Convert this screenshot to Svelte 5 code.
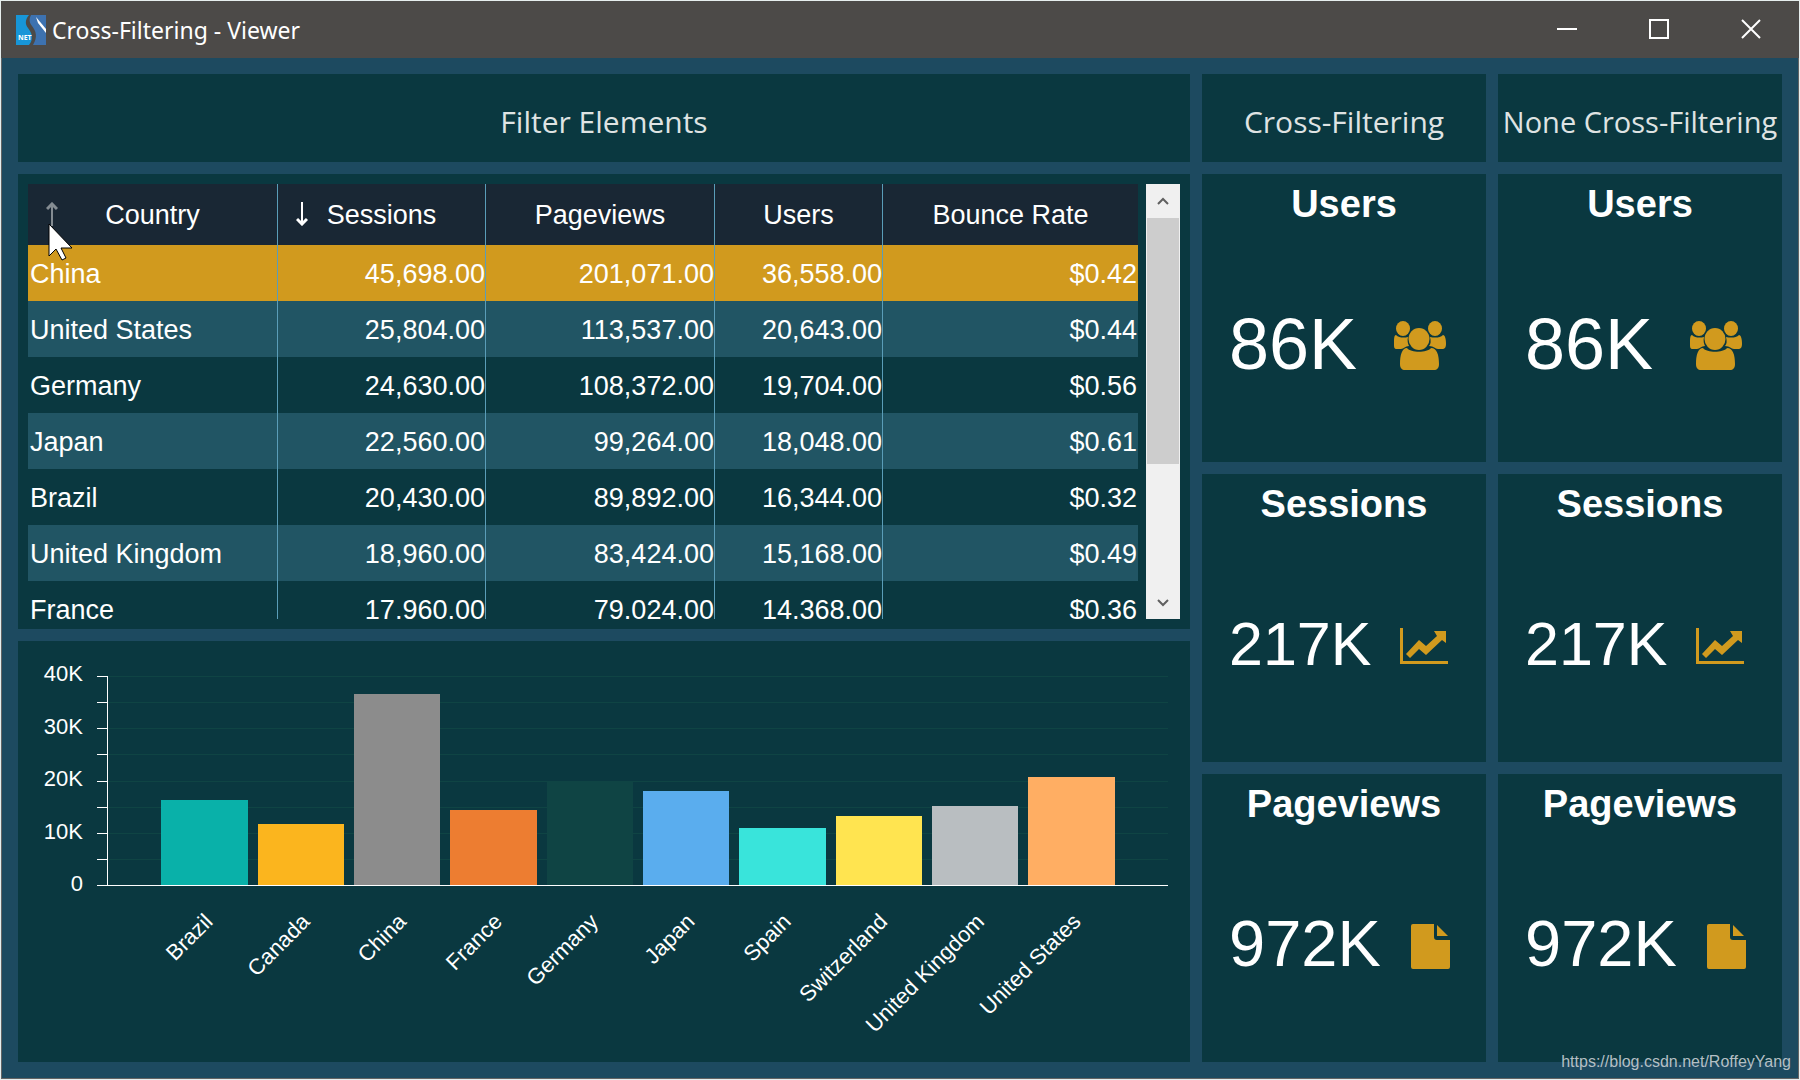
<script>
  // --- TABLE ---
  const columns = [
    { key: "country", label: "Country", sort: "asc" },
    { key: "sessions", label: "Sessions", sort: "desc" },
    { key: "pageviews", label: "Pageviews" },
    { key: "users", label: "Users" },
    { key: "bounce", label: "Bounce Rate" },
  ];

  const rows = [
    { country: "China", sessions: "45,698.00", pageviews: "201,071.00", users: "36,558.00", bounce: "$0.42" },
    { country: "United States", sessions: "25,804.00", pageviews: "113,537.00", users: "20,643.00", bounce: "$0.44" },
    { country: "Germany", sessions: "24,630.00", pageviews: "108,372.00", users: "19,704.00", bounce: "$0.56" },
    { country: "Japan", sessions: "22,560.00", pageviews: "99,264.00", users: "18,048.00", bounce: "$0.61" },
    { country: "Brazil", sessions: "20,430.00", pageviews: "89,892.00", users: "16,344.00", bounce: "$0.32" },
    { country: "United Kingdom", sessions: "18,960.00", pageviews: "83,424.00", users: "15,168.00", bounce: "$0.49" },
    { country: "France", sessions: "17,960.00", pageviews: "79,024.00", users: "14,368.00", bounce: "$0.36" },
  ];

  let selected = $state("China");

  // --- CHART ---
  const MAX = 40000;
  const axisLabels = ["40K", "30K", "20K", "10K", "0"];
  const bars = [
    { name: "Brazil", value: 16344, color: "#09b1a9" },
    { name: "Canada", value: 11700, color: "#fbb51e" },
    { name: "China", value: 36558, color: "#8c8c8c" },
    { name: "France", value: 14368, color: "#ed7d31" },
    { name: "Germany", value: 19704, color: "#0f4444" },
    { name: "Japan", value: 18048, color: "#5aadee" },
    { name: "Spain", value: 11000, color: "#39e4db" },
    { name: "Switzerland", value: 13300, color: "#ffe450" },
    { name: "United Kingdom", value: 15168, color: "#b9bec1" },
    { name: "United States", value: 20643, color: "#ffae63" },
  ];

  // --- INDICATORS ---
  const groups = [
    { title: "Cross-Filtering", size: "lg" },
    { title: "None Cross-Filtering", size: "md" },
  ];
  const indicators = [
    { title: "Users", value: "86K", icon: "users" },
    { title: "Sessions", value: "217K", icon: "trend" },
    { title: "Pageviews", value: "972K", icon: "file" },
  ];
</script>

<div class="window">
  <header class="titlebar">
    <svg class="logo" viewBox="0 0 30 30" aria-hidden="true">
      <path d="M0 0H13C9 5 9 9 12 13C16 18 18 24 13 30H0Z" fill="#1796d8" />
      <path d="M15 0H30V30H17C22 22 20 16 16 11C13 7 13 4 15 0Z" fill="#3d72b0" />
      <path d="M20 2L30 14V18L22 8Z" fill="#fff" />
      <text x="2" y="25" font-size="7" font-weight="700" fill="#fff" font-family="Open Sans, sans-serif">NET</text>
    </svg>
    <h1>Cross-Filtering - Viewer</h1>
    <div class="win-buttons">
      <button aria-label="Minimize"><svg viewBox="0 0 20 20"><path d="M0 10H20" /></svg></button>
      <button aria-label="Maximize"><svg viewBox="0 0 20 20"><path d="M1 1H19V19H1Z" /></svg></button>
      <button aria-label="Close"><svg viewBox="0 0 20 20"><path d="M1 1L19 19M19 1L1 19" /></svg></button>
    </div>
  </header>

  <main class="board">
    <section class="col wide">
      <div class="panel head"><h2 class="lg">Filter Elements</h2></div>

      <div class="panel table-panel">
        <div class="table-clip">
          <table>
            <colgroup>
              <col class="c1" /><col class="c2" /><col class="c3" /><col class="c4" /><col class="c5" />
            </colgroup>
            <thead>
              <tr>
                {#each columns as col}
                  <th>
                    <button class="sort">
                      {#if col.sort}
                        <svg class="arrow {col.sort}" viewBox="0 0 12 24" aria-hidden="true">
                          {#if col.sort === "asc"}
                            <path d="M6 24V1" /><path class="tip" d="M1 7L6 2L11 7" />
                          {:else}
                            <path d="M6 0V23" /><path class="tip" d="M1 17L6 22L11 17" />
                          {/if}
                        </svg>
                      {/if}
                      {col.label}
                    </button>
                  </th>
                {/each}
              </tr>
            </thead>
            <tbody>
              {#each rows as row}
                <tr class:selected={row.country === selected} onclick={() => (selected = row.country)}>
                  {#each columns as col}
                    <td>{row[col.key]}</td>
                  {/each}
                </tr>
              {/each}
            </tbody>
          </table>
          <svg class="cursor" viewBox="0 0 26 38" aria-hidden="true">
            <path d="M1 1V33L8 26L14 37L18 35L13 25H24Z" fill="#fff" stroke="#000" />
          </svg>
        </div>
        <div class="scrollbar">
          <button aria-label="Scroll up"><svg viewBox="0 0 12 9"><path d="M1 7L6 2L11 7" /></svg></button>
          <div class="track"><div class="thumb"></div></div>
          <button aria-label="Scroll down"><svg viewBox="0 0 12 9"><path d="M1 2L6 7L11 2" /></svg></button>
        </div>
      </div>

      <div class="panel chart">
        <div class="y-labels">
          {#each axisLabels as label}<span>{label}</span>{/each}
        </div>
        <div class="ticks">
          {#each Array(8) as _}<i></i>{/each}
        </div>
        <div class="plot">
          <div class="lines">
            {#each Array(8) as _}<i></i>{/each}
          </div>
          <div class="bars">
            {#each bars as bar}
              <div class="bar" style="height: {(bar.value / MAX) * 100}%; background: {bar.color}"></div>
            {/each}
          </div>
        </div>
        <div class="x-labels">
          {#each bars as bar}
            <div class="slot"><span>{bar.name}</span></div>
          {/each}
        </div>
      </div>
    </section>

    {#each groups as group}
      <section class="col">
        <div class="panel head"><h2 class={group.size}>{group.title}</h2></div>
        {#each indicators as item}
          <div class="panel card">
            <h3>{item.title}</h3>
            <div class="reading {item.icon}">
              <span class="value">{item.value}</span>
              {#if item.icon === "users"}
                <svg width="56" height="50" viewBox="1 0 56 50" aria-hidden="true">
                  <ellipse cx="10" cy="7.500" rx="7" ry="7.500" />
                  <ellipse cx="42" cy="7.500" rx="7" ry="7.500" />
                  <path d="M3 14C6 17 11 17 15 16C14 20 15 23 16 25C12 25 11 28 8 28H4C1 28 1 26 1 23C1 18 1 14 3 14Z" />
                  <path d="M50 14C47 17 42 17 37 16C38 20 38 23 36 25C41 25 42 28 45 28H49C52 28 53 26 53 23C53 18 52 14 50 14Z" />
                  <ellipse cx="26" cy="18" rx="10.500" ry="11" />
                  <path d="M14 27C18 32 34 32 38 27C44 27 46 34 46 43C46 47 44 49 41 49H12C9 49 7 47 7 43C7 34 9 27 14 27Z" />
                </svg>
              {:else if item.icon === "trend"}
                <svg width="50" height="38" viewBox="0 0 50 38" aria-hidden="true">
                  <path d="M0 1H3V34H48V37H0Z" />
                  <path d="M6 27L19 13L26 19L37 9L34 4H46V16L42 13L26 28L19 22L10 31Z" />
                </svg>
              {:else}
                <svg width="40" height="46" viewBox="-1 0 40 46" aria-hidden="true">
                  <path d="M2 1H23V14Q23 17 26 17H39V44Q39 46 37 46H2Q0 46 0 44V3Q0 1 2 1Z" />
                  <path d="M26 2L37 13H26Z" />
                </svg>
              {/if}
            </div>
          </div>
        {/each}
      </section>
    {/each}
  </main>

  <div class="watermark">https://blog.csdn.net/RoffeyYang</div>
</div>

<style>
  :global(body) { margin: 0; background: #1d4a60; }

  .window {
    position: relative;
    box-sizing: border-box;
    height: 100vh; min-height: 800px;
    display: flex; flex-direction: column;
    border: 1px solid #e6eeee;
    box-shadow: inset 0 0 0 1px #646464;
    background: #1d4a60;
    color: #fff;
    font-family: "Liberation Sans", Arial, sans-serif;
    overflow: hidden;
  }
  h1, h2, h3 { margin: 0; font-weight: 400; }
  button { font: inherit; color: inherit; background: none; border: 0; padding: 0; }

  /* --- TITLE BAR --- */
  .titlebar {
    display: flex; align-items: center;
    height: 57px; flex-shrink: 0;
    padding: 0 2px 0 15px;
    background: #4c4a48;
  }
  .logo { width: 30px; height: 30px; margin-right: 6px; }
  h1 { font: 400 23px/32px "Noto Sans", "Segoe UI", sans-serif; }
  .win-buttons { display: flex; height: 56px; align-self: flex-start; margin-left: auto; }
  .win-buttons button { width: 92px; display: flex; align-items: center; justify-content: center; }
  .win-buttons svg { width: 20px; height: 20px; fill: none; stroke: #fff; stroke-width: 2; }

  /* --- BOARD --- */
  .board {
    flex: 1; min-height: 0;
    display: grid; grid-template-columns: 1172fr 284fr 284fr; gap: 12px;
    padding: 16px 17px 17px;
  }
  .col {
    display: grid; gap: 12px; min-width: 0; min-height: 0;
    grid-template-rows: 88px repeat(3, minmax(0, 1fr));
  }
  .col.wide { grid-template-rows: 88px minmax(0, 455fr) minmax(0, 421fr); }
  .panel { background: #0a3840; box-sizing: border-box; min-width: 0; }
  .head { display: flex; align-items: center; justify-content: center; }
  h2 { color: #dfe3e3; white-space: nowrap; font-family: "Open Sans", "Segoe UI", sans-serif; font-weight: 400; padding-top: 6px; }
  h2.lg { font-size: 30px; }
  h2.md { font-size: 29px; }

  /* --- TABLE --- */
  .table-panel { display: flex; gap: 8px; padding: 10px; }
  .table-clip { position: relative; flex: 1; overflow: hidden; }
  table { width: 100%; table-layout: fixed; border-collapse: separate; border-spacing: 0; font-size: 27px; line-height: 32px; }
  .c1 { width: 22.52%; }
  .c2 { width: 18.74%; }
  .c3 { width: 20.63%; }
  .c4 { width: 15.14%; }
  .c5 { width: 22.97%; }
  th { height: 61px; padding: 0; font-weight: 400; background: #192734; }
  td { box-sizing: border-box; height: 56px; padding: 2px 0 0; text-align: right; white-space: nowrap; }
  td:first-child { text-align: left; padding-left: 2px; }
  td:last-child { padding-right: 1px; }
  th:not(:last-child), td:not(:last-child) { border-right: 1px solid #5a9db8; }
  tbody tr:nth-child(even) { background: #215564; }
  tbody tr.selected { background: #d19a1e; }
  .sort { position: relative; width: 100%; height: 61px; }
  .arrow { position: absolute; left: 18px; top: 18px; width: 12px; height: 24px; fill: none; stroke: #fff; stroke-width: 2; }
  .arrow .tip { stroke-width: 3; }
  .arrow.asc { stroke: #848c92; }
  .cursor { position: absolute; left: 20px; top: 39px; width: 26px; height: 38px; }

  .scrollbar { width: 34px; display: flex; flex-direction: column; background: #f0f0f0; }
  .scrollbar button { height: 34px; display: flex; align-items: center; justify-content: center; }
  .scrollbar svg { width: 12px; height: 9px; fill: none; stroke: #606060; stroke-width: 2; }
  .track { flex: 1; padding: 0 1px; }
  .thumb { height: 67%; background: #cdcdcd; }

  /* --- CHART --- */
  .chart {
    display: grid; grid-template-columns: 65px 25px 1fr; grid-template-rows: 1fr 176px;
    padding: 35px 22px 0 0;
    font-size: 22px; line-height: 22px;
  }
  .y-labels { display: flex; flex-direction: column; justify-content: space-between; text-align: right; margin: -13px 0 -9px; }
  .ticks, .lines { display: flex; flex-direction: column; }
  .ticks i, .lines i { flex: 1; box-sizing: border-box; border-top: 1px solid #fff; }
  .ticks { margin-left: 14px; border-right: 1px solid #fff; border-bottom: 1px solid #fff; }
  .lines i { border-color: #0f4444; }
  .plot { display: grid; border-bottom: 1px solid #fff; }
  .lines, .bars { grid-area: 1 / 1; min-height: 0; }
  .bars, .x-labels { display: flex; padding: 0 calc(100% / 22); }
  .bars { align-items: flex-end; }
  .bar { flex: 1; margin: 0 5px; }
  .x-labels { grid-column: 3; padding-top: 21px; }
  .slot { flex: 1; min-width: 0; display: grid; grid-template-columns: minmax(0, 1fr) minmax(0, 1fr); }
  .slot span { justify-self: end; align-self: start; white-space: nowrap; transform: translateX(5px) rotate(-45deg); transform-origin: right center; }

  /* --- INDICATORS --- */
  .card { display: flex; flex-direction: column; }
  h3 { padding-top: 8px; text-align: center; font-size: 38px; line-height: 44px; font-weight: 700; }
  .reading { flex: 1; display: flex; align-items: center; justify-content: space-between; padding: 0 36px 0 27px; }
  .reading svg { fill: #d19a1e; margin-top: 3px; }
  .value { line-height: 72px; }
  .users .value { font-size: 72px; }
  .trend .value { font-size: 61px; }
  .file .value { font-size: 65px; }

  .watermark { position: absolute; right: 8px; bottom: 7px; font-size: 16px; line-height: 20px; color: #b4bfc4; }
</style>
